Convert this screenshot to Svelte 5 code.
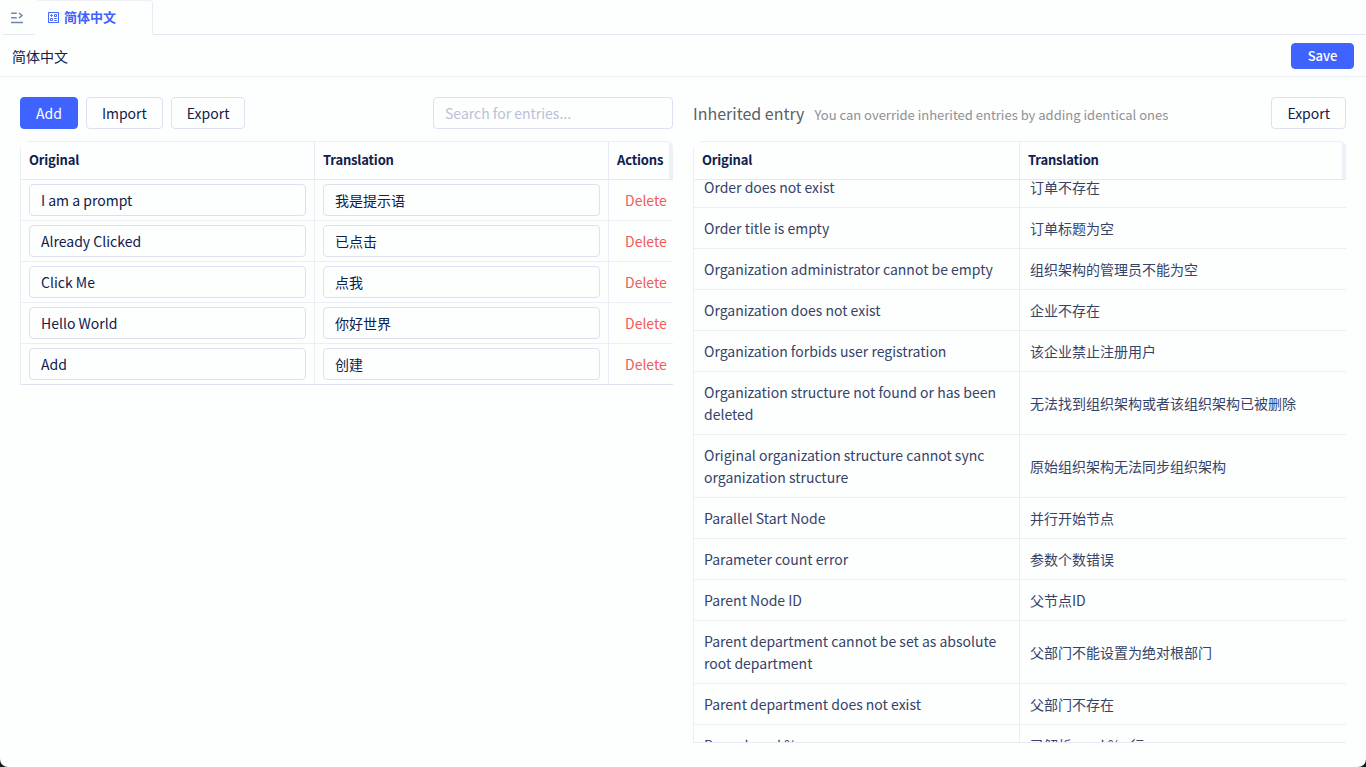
<script>
  const entries = [
    ['I am a prompt', '我是提示语'],
    ['Already Clicked', '已点击'],
    ['Click Me', '点我'],
    ['Hello World', '你好世界'],
    ['Add', '创建'],
  ];
  const inherited = [
    ['Order does not exist', '订单不存在'],
    ['Order title is empty', '订单标题为空'],
    ['Organization administrator cannot be empty', '组织架构的管理员不能为空'],
    ['Organization does not exist', '企业不存在'],
    ['Organization forbids user registration', '该企业禁止注册用户'],
    ['Organization structure not found or has been deleted', '无法找到组织架构或者该组织架构已被删除'],
    ['Original organization structure cannot sync organization structure', '原始组织架构无法同步组织架构'],
    ['Parallel Start Node', '并行开始节点'],
    ['Parameter count error', '参数个数错误'],
    ['Parent Node ID', '父节点ID'],
    ['Parent department cannot be set as absolute root department', '父部门不能设置为绝对根部门'],
    ['Parent department does not exist', '父部门不存在'],
    ['Parsed read %s rows', '已解析 read %s 行'],
  ];
</script>

<div class="window">
  <nav class="tabs">
    <div class="toggle">
      <svg width="14" height="14" viewBox="0 0 14 14" fill="none" stroke="#6f86ac" stroke-width="1.5">
        <path d="M1.2 2.3h5.5M1.2 6.7h5.5M1 11.6h12M9 2l3 2.5-3 2.5" />
      </svg>
    </div>
    <div class="tab">
      <svg width="11" height="11" viewBox="0 0 11 11" fill="none" stroke="#4a69ff" stroke-width="1">
        <rect x="0.5" y="0.5" width="10" height="10" rx="0.5" stroke-width="1.2" />
        <path d="M2.2 3.5h2.6M3.5 2.2v2.6M6.5 2.5h2v2h-2zM2.5 6.5h2v2h-2zM6.2 6.5h2.6M6.2 8.5h2.6" />
      </svg>
      <span>简体中文</span>
    </div>
    <div class="rest"></div>
  </nav>

  <header class="title">
    <span>简体中文</span>
    <button class="btn primary small">Save</button>
  </header>

  <main>
    <section class="own">
      <div class="bar">
        <button class="btn primary">Add</button>
        <button class="btn">Import</button>
        <button class="btn">Export</button>
        <input class="search" placeholder="Search for entries..." />
      </div>
      <div class="table">
        <div class="row head">
          <div>Original</div>
          <div>Translation</div>
          <div>Actions</div>
          <i class="gutter"></i>
        </div>
        {#each entries as [source, target]}
          <div class="row">
            <div><input value={source} /></div>
            <div><input value={target} /></div>
            <div class="delete">Delete</div>
          </div>
        {/each}
      </div>
    </section>

    <section class="inherited">
      <div class="bar">
        <h2>Inherited entry</h2>
        <p>You can override inherited entries by adding identical ones</p>
        <button class="btn">Export</button>
      </div>
      <div class="table">
        <div class="row head">
          <div>Original</div>
          <div>Translation</div>
          <i class="gutter"></i>
        </div>
        <div class="scroll">
          <div class="rows">
            {#each inherited as [source, target]}
              <div class="row">
                <div>{source}</div>
                <div>{target}</div>
              </div>
            {/each}
          </div>
        </div>
      </div>
    </section>
  </main>
</div>

<style>
  :global(body) {
    background: #16181d;
  }
  .window,
  .window * {
    box-sizing: border-box;
  }
  .window {
    height: 767px;
    display: flex;
    flex-direction: column;
    overflow: hidden;
    background: #fdfefe;
    border-radius: 0 0 8px 8px;
    color: #10204c;
    font: 14px/22px 'Noto Sans CJK SC', sans-serif;
  }
  .tabs {
    display: flex;
    height: 35px;
    flex: none;
  }
  .toggle {
    width: 32px;
    margin-left: 3px;
    padding: 11px 0 0 7px;
    border-bottom: 1px solid #e4e7f2;
  }
  .toggle svg,
  .tab svg {
    display: block;
  }
  .tab svg {
    margin-top: 2px;
  }
  .tab {
    width: 118px;
    height: 34px;
    display: flex;
    align-items: center;
    gap: 5px;
    padding: 0 0 2px 13px;
    border-top: 1px solid #f0f1f6;
    border-right: 1px solid #e9ebf4;
    border-radius: 4px 4px 0 0;
    color: #4060ff;
    font-size: 13px;
    font-weight: 700;
  }
  .rest {
    flex: 1;
    border-bottom: 1px solid #e4e7f2;
  }
  .title {
    height: 42px;
    flex: none;
    display: flex;
    align-items: center;
    justify-content: space-between;
    padding: 0 12px;
    border-bottom: 1px solid #eef0f6;
  }
  .btn {
    height: 32px;
    flex: none;
    padding: 0 15px;
    border: 1px solid #dde0ee;
    border-radius: 4px;
    background: #fdfefe;
    color: #10204c;
    font: 400 14px/22px 'Noto Sans CJK SC', sans-serif;
    white-space: nowrap;
  }
  .btn.primary {
    border-color: #3f63ff;
    background: #3f63ff;
    color: #fff;
  }
  .btn.small {
    width: 63px;
    height: 26px;
    padding: 0;
    font-size: 13px;
    font-weight: 500;
    line-height: 20px;
  }
  main {
    flex: 1;
    min-height: 0;
    display: flex;
    gap: 20px;
    padding: 20px 20px 24px;
  }
  section {
    width: 653px;
    display: flex;
    flex-direction: column;
    gap: 12px;
  }
  .bar {
    height: 32px;
    flex: none;
    display: flex;
    align-items: center;
    gap: 8px;
  }
  input {
    width: 100%;
    height: 32px;
    display: block;
    padding: 0 11px;
    border: 1px solid #dde0ee;
    border-radius: 4px;
    background: transparent;
    color: #10204c;
    font: 400 14px/22px 'Noto Sans CJK SC', sans-serif;
  }
  .search {
    width: 240px;
    margin-left: auto;
  }
  input::placeholder {
    color: #bac1d8;
    opacity: 1;
  }
  h2 {
    margin: 0;
    color: #5c5e66;
    font-size: 16px;
    font-weight: 400;
  }
  p {
    margin: 3px auto 0 2px;
    color: #8f9096;
    font-size: 13px;
    white-space: nowrap;
  }
  .table {
    border-left: 1px solid #eceef5;
    border-top: 1px solid #eceef5;
    border-top-right-radius: 7px;
    position: relative;
  }
  .table::before {
    content: '';
    position: absolute;
    left: -1px;
    top: -1px;
    width: 7px;
    height: 7px;
    z-index: 1;
    background: #fdfefe;
  }
  .row {
    display: grid;
    border-bottom: 1px solid #eceef5;
  }
  .own .row {
    grid-template-columns: 294px 294px 64px;
  }
  .own .row > div {
    height: 40px;
    padding: 4px 8px;
    border-right: 1px solid #eceef5;
  }
  .own .row > div:nth-child(3) {
    border-right: 0;
  }
  .own .row:last-child {
    border-color: #dfe2ee;
  }
  .own .row .delete {
    padding: 9px 0 0 16px;
    color: #f25b58;
  }
  .table .row.head {
    height: 38px;
    position: relative;
    border-color: #e6e8f3;
    font-size: 13px;
    font-weight: 700;
    letter-spacing: -0.17px;
  }
  .table .row.head > div {
    height: 37px;
    padding: 7px 8px;
    border-color: #e6e8f3;
  }
  .gutter {
    position: absolute;
    top: 0;
    right: 0;
    bottom: 0;
    width: 4px;
    border-top-right-radius: 4px 6px;
    background: #edf0f6;
  }
  .inherited .table {
    flex: 1;
    min-height: 0;
    display: flex;
    flex-direction: column;
    border-bottom: 1px solid #e8eaf3;
  }
  .inherited .row {
    grid-template-columns: 326px 326px;
    color: #364369;
  }
  .inherited .row.head {
    flex: none;
    color: #10204c;
  }
  .inherited .row > div {
    display: flex;
    align-items: center;
    min-height: 40px;
    padding: 9px 10px;
  }
  .inherited .row > div:first-child {
    border-right: 1px solid #eceef5;
  }
  .inherited .table .row.head > div {
    min-height: 0;
    align-items: flex-start;
    padding: 7px 8px;
  }
  .scroll {
    flex: 1;
    min-height: 0;
    overflow: hidden;
  }
  .rows {
    margin-top: -13px;
  }
</style>
